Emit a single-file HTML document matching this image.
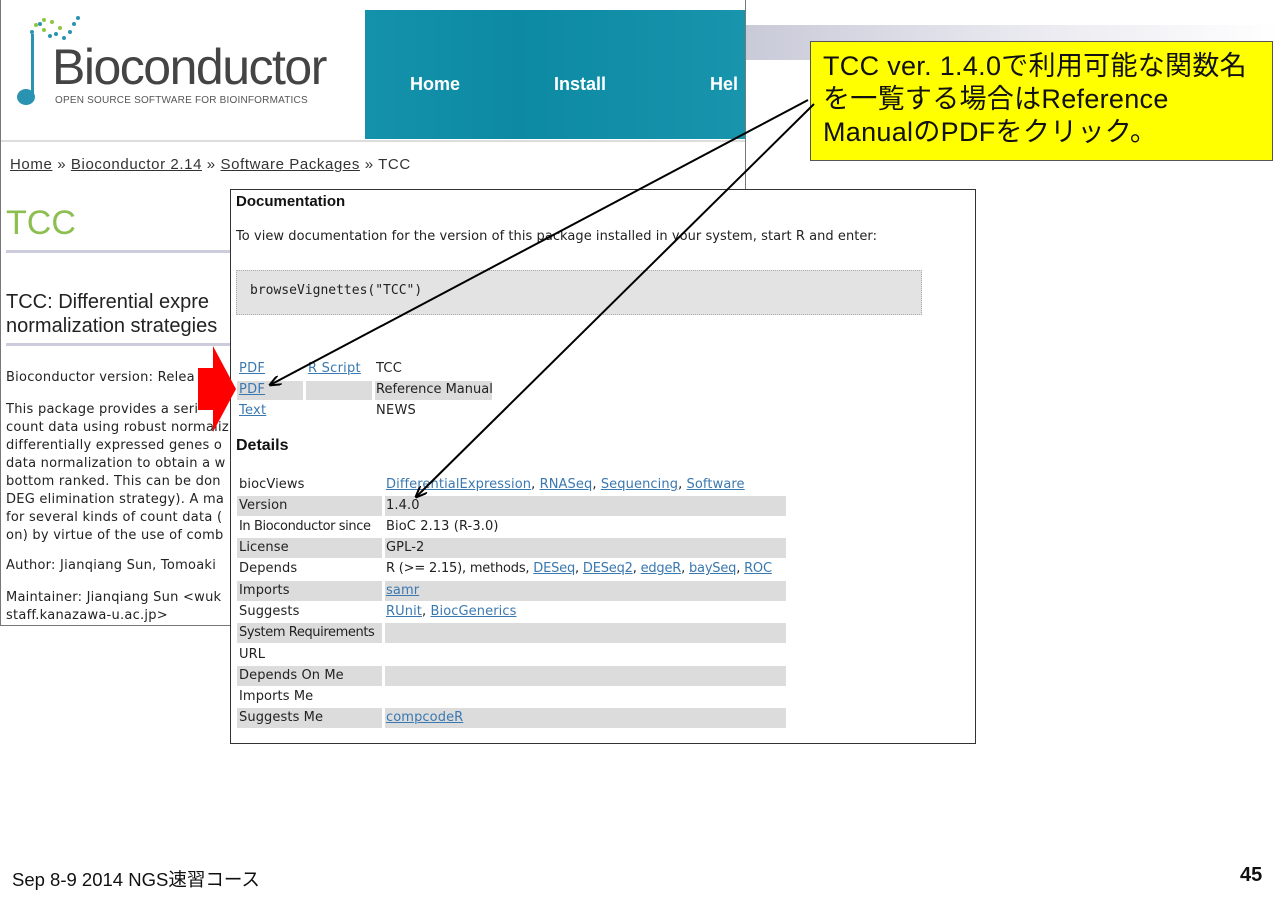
<!DOCTYPE html>
<html><head><meta charset="utf-8">
<style>
*{margin:0;padding:0;box-sizing:border-box}
body{width:1280px;height:904px;position:relative;background:#fff;overflow:hidden;font-family:"DejaVu Sans",sans-serif;color:#222}
.a{position:absolute;white-space:nowrap}
.v{font-size:13px;letter-spacing:0.25px}
.u{color:#3a78b0;text-decoration:underline}
.r{position:absolute;left:237px;width:549px;height:20px;font-size:13px;letter-spacing:0.1px}
.r.g .l,.r.g .d{background:#dcdcdc}
.r .l{position:absolute;left:0;width:145px;top:0;height:20px;padding:2px 2px;overflow:hidden}
.r .d{position:absolute;left:148px;right:0;top:0;height:20px;padding:2px 1px}
</style></head><body>
<div class="a" style="left:745px;top:25px;width:535px;height:35px;background:linear-gradient(90deg,#c9cad8,#e8e8ef 50%,#fff)"></div>
<div class="a" style="left:0;top:0;width:746px;height:626px;border-left:1px solid #777;border-right:1px solid #777;border-bottom:1px solid #777"></div>
<div class="a" style="left:1px;top:140px;width:744px;height:2px;background:#ddd"></div>
<svg class="a" style="left:14px;top:12px" width="100" height="100">
<g fill="#8dc63f"><circle cx="22" cy="13" r="2"/><circle cx="30" cy="8" r="2"/><circle cx="38" cy="10" r="2"/><circle cx="46" cy="16" r="2"/><circle cx="30" cy="18" r="2"/></g>
<g fill="#2a93b2"><circle cx="18" cy="20" r="2"/><circle cx="26" cy="12" r="2"/><circle cx="42" cy="22" r="2"/><circle cx="50" cy="26" r="2"/><circle cx="56" cy="20" r="2"/><circle cx="60" cy="12" r="2"/><circle cx="64" cy="6" r="2"/><circle cx="36" cy="24" r="2"/></g>
<rect x="17" y="22" width="3" height="62" fill="#2a93b2"/>
<ellipse cx="12" cy="85" rx="9" ry="8" fill="#2a93b2"/>
</svg>
<div class="a" style="left:52px;top:42px;font-family:'Liberation Sans',sans-serif;font-size:50px;color:#444;letter-spacing:-1.5px;line-height:1">Bioconductor</div>
<div class="a" style="left:55px;top:95px;font-family:'Liberation Sans',sans-serif;font-size:10px;color:#555;letter-spacing:0.2px">OPEN SOURCE SOFTWARE FOR BIOINFORMATICS</div>
<div class="a" style="left:365px;top:10px;width:380px;height:129px;background:linear-gradient(90deg,#1592ab,#0d8aa3 40%,#1894ad)"></div>
<div class="a" style="left:410px;top:74px;font-family:'Liberation Sans',sans-serif;font-weight:bold;font-size:18px;color:#fff">Home</div>
<div class="a" style="left:554px;top:74px;font-family:'Liberation Sans',sans-serif;font-weight:bold;font-size:18px;color:#fff">Install</div>
<div class="a" style="left:710px;top:74px;font-family:'Liberation Sans',sans-serif;font-weight:bold;font-size:18px;color:#fff">Hel</div>
<div class="a" style="left:10px;top:156px;font-family:'Liberation Sans',sans-serif;font-size:15px;letter-spacing:0.6px;color:#333"><span style="text-decoration:underline">Home</span> » <span style="text-decoration:underline">Bioconductor 2.14</span> » <span style="text-decoration:underline">Software Packages</span> » TCC</div>
<div class="a" style="left:6px;top:204px;font-family:'Liberation Sans',sans-serif;font-size:34px;color:#8cbf50">TCC</div>
<div class="a" style="left:6px;top:250px;width:224px;height:3px;background:#ccd"></div>
<div class="a" style="left:6px;top:290px;font-family:'Liberation Sans',sans-serif;font-size:20px;color:#222;line-height:24px">TCC: Differential expre<br>normalization strategies</div>
<div class="a" style="left:6px;top:343px;width:224px;height:3px;background:#ccd"></div>
<div class="a v" style="left:6px;top:370px">Bioconductor version: Relea</div>
<div class="a v" style="left:6px;top:401px;line-height:18px">This package provides a seri<br>count data using robust normaliz<br>differentially expressed genes o<br>data normalization to obtain a w<br>bottom ranked. This can be don<br>DEG elimination strategy). A ma<br>for several kinds of count data (<br>on) by virtue of the use of comb</div>
<div class="a v" style="left:6px;top:558px">Author: Jianqiang Sun, Tomoaki</div>
<div class="a v" style="left:6px;top:589px;line-height:18px">Maintainer: Jianqiang Sun &lt;wuk<br>staff.kanazawa-u.ac.jp&gt;</div>
<div class="a" style="left:230px;top:189px;width:746px;height:555px;background:#fff;border:1.5px solid #333"></div>
<div class="a" style="left:236px;top:193px;font-family:'Liberation Sans',sans-serif;font-weight:bold;font-size:15px;color:#111">Documentation</div>
<div class="a" style="left:236px;top:229px;font-size:13px;letter-spacing:0.05px">To view documentation for the version of this package installed in your system, start R and enter:</div>
<div class="a" style="left:236px;top:270px;width:686px;height:45px;background:#e3e3e3;border:1px dotted #aaa"></div>
<div class="a" style="left:250px;top:283px;font-family:'DejaVu Sans Mono',monospace;font-size:13px;color:#222">browseVignettes("TCC")</div>
<div class="a" style="left:237px;top:381px;width:66px;height:19px;background:#dcdcdc"></div>
<div class="a" style="left:306px;top:381px;width:66px;height:19px;background:#dcdcdc"></div>
<div class="a" style="left:375px;top:381px;width:117px;height:19px;background:#dcdcdc"></div>
<div class="a v" style="left:239px;top:361px"><span class="u">PDF</span></div>
<div class="a v" style="left:308px;top:361px"><span class="u">R Script</span></div>
<div class="a v" style="left:376px;top:361px">TCC</div>
<div class="a v" style="left:239px;top:382px"><span class="u">PDF</span></div>
<div class="a" style="left:376px;top:382px;font-size:13px">Reference Manual</div>
<div class="a v" style="left:239px;top:403px"><span class="u">Text</span></div>
<div class="a v" style="left:376px;top:403px">NEWS</div>
<div class="a" style="left:236px;top:437px;font-family:'Liberation Sans',sans-serif;font-weight:bold;font-size:16px;color:#111">Details</div>
<div class="r" style="top:475px"><div class="l">biocViews</div><div class="d"><span class="u">DifferentialExpression</span>, <span class="u">RNASeq</span>, <span class="u">Sequencing</span>, <span class="u">Software</span></div></div>
<div class="r g" style="top:496px"><div class="l">Version</div><div class="d">1.4.0</div></div>
<div class="r" style="top:517px"><div class="l" style="letter-spacing:-0.4px">In Bioconductor since</div><div class="d">BioC 2.13 (R-3.0)</div></div>
<div class="r g" style="top:538px"><div class="l">License</div><div class="d">GPL-2</div></div>
<div class="r" style="top:559px"><div class="l">Depends</div><div class="d" style="overflow:hidden;letter-spacing:-0.2px">R (&gt;= 2.15), methods, <span class="u">DESeq</span>, <span class="u">DESeq2</span>, <span class="u">edgeR</span>, <span class="u">baySeq</span>, <span class="u">ROC</span></div></div>
<div class="r g" style="top:581px"><div class="l">Imports</div><div class="d"><span class="u">samr</span></div></div>
<div class="r" style="top:602px"><div class="l">Suggests</div><div class="d"><span class="u">RUnit</span>, <span class="u">BiocGenerics</span></div></div>
<div class="r g" style="top:623px"><div class="l" style="letter-spacing:-0.4px">System Requirements</div><div class="d"></div></div>
<div class="r" style="top:645px"><div class="l">URL</div><div class="d"></div></div>
<div class="r g" style="top:666px"><div class="l">Depends On Me</div><div class="d"></div></div>
<div class="r" style="top:687px"><div class="l">Imports Me</div><div class="d"></div></div>
<div class="r g" style="top:708px"><div class="l">Suggests Me</div><div class="d"><span class="u">compcodeR</span></div></div>
<div class="a" style="left:810px;top:41px;width:463px;height:120px;background:#ffff00;border:1.5px solid #555;font-family:'Liberation Sans','Noto Sans CJK JP',sans-serif;font-size:27px;line-height:33px;letter-spacing:0.3px;color:#111;padding:8px 0 0 12px;white-space:nowrap;overflow:hidden">TCC ver. 1.4.0で利用可能な関数名<br>を一覧する場合はReference<br>ManualのPDFをクリック。</div>
<svg class="a" style="left:0;top:0" width="1280" height="904">
<defs><marker id="m" markerWidth="12" markerHeight="10" refX="11" refY="5" orient="auto" markerUnits="userSpaceOnUse"><path d="M0,0 L12,5 L0,10" fill="none" stroke="#000" stroke-width="2"/></marker></defs>
<line x1="808" y1="100" x2="270" y2="385" stroke="#000" stroke-width="2" marker-end="url(#m)"/>
<line x1="814" y1="104" x2="416" y2="497" stroke="#000" stroke-width="2" marker-end="url(#m)"/>
<polygon points="198,368 213,368 213,346 236,389 213,432 213,410 198,410" fill="#f00"/>
</svg>
<div class="a" style="left:12px;top:866px;font-family:'Liberation Sans','Noto Sans CJK JP',sans-serif;font-size:18.5px;color:#111">Sep 8-9 2014 NGS速習コース</div>
<div class="a" style="left:1240px;top:864px;font-family:'Liberation Sans',sans-serif;font-weight:bold;font-size:20px;color:#111">45</div>
</body></html>
